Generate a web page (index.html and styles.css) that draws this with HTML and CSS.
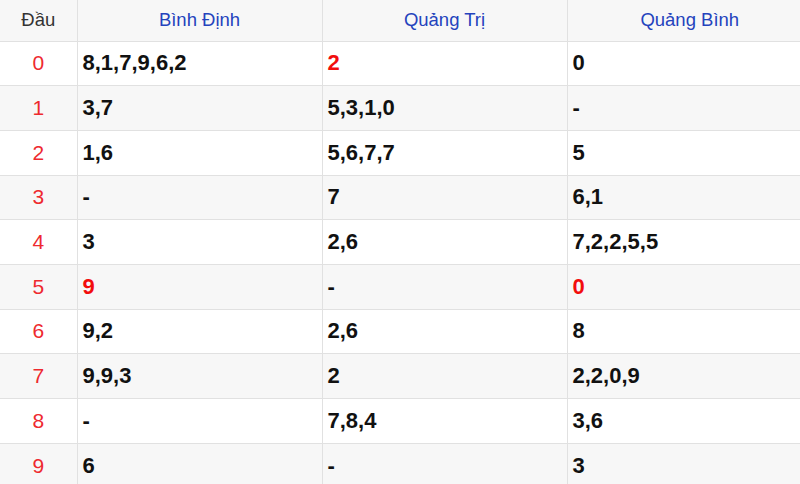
FILE: index.html
```html
<!DOCTYPE html>
<html lang="vi">
<head>
<meta charset="utf-8">
<title>Lô tô đầu</title>
<link rel="stylesheet" href="styles.css">
</head>
<body>
<table class="kq">
  <colgroup>
    <col class="c-dau">
    <col class="c-tinh">
    <col class="c-tinh">
    <col class="c-tinh">
  </colgroup>
  <thead>
    <tr class="head">
      <th class="lbl">Đầu</th>
      <th>Bình Định</th>
      <th>Quảng Trị</th>
      <th>Quảng Bình</th>
    </tr>
  </thead>
  <tbody>
    <tr><td class="dau">0</td><td>8,1,7,9,6,2</td><td class="hot">2</td><td>0</td></tr>
    <tr><td class="dau">1</td><td>3,7</td><td>5,3,1,0</td><td>-</td></tr>
    <tr><td class="dau">2</td><td>1,6</td><td>5,6,7,7</td><td>5</td></tr>
    <tr><td class="dau">3</td><td>-</td><td>7</td><td>6,1</td></tr>
    <tr><td class="dau">4</td><td>3</td><td>2,6</td><td>7,2,2,5,5</td></tr>
    <tr><td class="dau">5</td><td class="hot">9</td><td>-</td><td class="hot">0</td></tr>
    <tr><td class="dau">6</td><td>9,2</td><td>2,6</td><td>8</td></tr>
    <tr><td class="dau">7</td><td>9,9,3</td><td>2</td><td>2,2,0,9</td></tr>
    <tr><td class="dau">8</td><td>-</td><td>7,8,4</td><td>3,6</td></tr>
    <tr><td class="dau">9</td><td>6</td><td>-</td><td>3</td></tr>
  </tbody>
</table>
</body>
</html>
```

FILE: styles.css
```css
html, body {
  margin: 0;
  padding: 0;
  background: #ffffff;
}

body {
  font-family: "Liberation Sans", Arial, sans-serif;
  overflow: hidden;
}

.kq {
  width: 812px;
  border-collapse: collapse;
  table-layout: fixed;
}

.c-dau { width: 77px; }
.c-tinh { width: 245px; }

.kq th,
.kq td {
  padding: 0 0 0 5px;
  border-right: 1px solid #e1e1e1;
  border-bottom: 1px solid #e1e1e1;
  box-sizing: border-box;
}

.kq th:last-child,
.kq td:last-child {
  border-right: none;
}

.head th {
  height: 41px;
  background: #f7f7f7;
  font-weight: normal;
  font-size: 18.5px;
  color: #2443bd;
  text-align: center;
  padding: 0 0 1px;
}

.head th.lbl {
  color: #333333;
}

.kq tbody tr {
  height: 44.7px;
}

.kq tbody tr:nth-child(even) {
  background: #f7f7f7;
}

.kq td {
  font-size: 22px;
  font-weight: bold;
  color: #111111;
}

.kq td.dau {
  text-align: center;
  font-weight: normal;
  font-size: 21px;
  color: #ee2a2f;
  padding: 0;
}

.kq td.hot {
  color: #f20d0d;
}
```
